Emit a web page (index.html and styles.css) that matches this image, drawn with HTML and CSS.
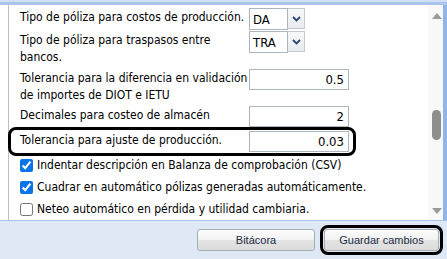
FILE: index.html
```html
<!DOCTYPE html>
<html lang="es">
<head>
  <meta charset="UTF-8">
  <title>Configuración</title>
  <link rel="stylesheet" href="styles.css">
</head>
<body>
  <div class="topbar"></div>
  <div class="panel">
    <div class="gutter"></div>
    <div class="content">
      <div class="row row-1">
        <div class="label">Tipo de póliza para costos de producción.</div>
        <div class="select">
          <span class="select-text">DA</span>
          <span class="select-btn">
            <svg width="9" height="6" viewBox="0 0 9 6"><path d="M1 1 L4.5 4.5 L8 1" fill="none" stroke="#2b4573" stroke-width="1.8"/></svg>
          </span>
        </div>
      </div>
      <div class="row row-2">
        <div class="label">Tipo de póliza para traspasos entre bancos.</div>
        <div class="select">
          <span class="select-text">TRA</span>
          <span class="select-btn">
            <svg width="9" height="6" viewBox="0 0 9 6"><path d="M1 1 L4.5 4.5 L8 1" fill="none" stroke="#2b4573" stroke-width="1.8"/></svg>
          </span>
        </div>
      </div>
      <div class="row row-3">
        <div class="label">Tolerancia para la diferencia en validación de importes de DIOT e IETU</div>
        <div class="field">0.5</div>
      </div>
      <div class="row row-4">
        <div class="label">Decimales para costeo de almacén</div>
        <div class="field">2</div>
      </div>
      <div class="row highlight">
        <div class="label">Tolerancia para ajuste de producción.</div>
        <div class="field">0.03</div>
      </div>
      <div class="checks">
        <label class="check"><input type="checkbox" checked> Indentar descripción en Balanza de comprobación (CSV)</label>
        <label class="check"><input type="checkbox" checked> Cuadrar en automático pólizas generadas automáticamente.</label>
        <label class="check"><input type="checkbox"> Neteo automático en pérdida y utilidad cambiaria.</label>
      </div>
    </div>
    <div class="scrollbar">
      <span class="arrow-up"></span>
      <span class="thumb"></span>
      <span class="arrow-down"></span>
    </div>
    <div class="edge"></div>
  </div>
  <div class="footer">
    <button class="btn">Bitácora</button>
    <div class="focus-ring">
      <button class="btn">Guardar cambios</button>
    </div>
  </div>
</body>
</html>
```

FILE: styles.css
```css
body {
  margin: 0;
  width: 447px;
  height: 259px;
  overflow: hidden;
  background-color: #dfe8f5;
  font-family: "DejaVu Sans Condensed", "DejaVu Sans", sans-serif;
  font-stretch: condensed;
  font-size: 12px;
  color: #000;
}
.topbar {
  height: 2px;
  background-color: #cfdff4;
  border-bottom: 3px solid #a9c5ec;
}
.panel {
  display: flex;
  height: 215px;
  background-color: #fff;
  border-bottom: 1px solid #a9c4ea;
}
.gutter {
  width: 8px;
  border-right: 1px solid #b8c2ce;
}
.content {
  flex: 1;
  padding-top: 3px;
}
.row {
  display: flex;
  align-items: flex-start;
  padding-left: 11px;
}
.row-2 { margin-top: 1px; }
.row-3 { margin-top: 3px; }
.row-4 { margin-top: 2px; }
.label {
  width: 229px;
  line-height: 17px;
  padding-top: 1px;
}
.row-2 .label {
  width: 210px;
  margin-right: 19px;
}
.select {
  display: flex;
  height: 22px;
}
.select-text {
  width: 34px;
  height: 20px;
  line-height: 21px;
  padding-left: 3px;
  border: 1px solid #aeb5bf;
  font-size: 13px;
}
.select-btn {
  width: 16px;
  height: 19px;
  border: 1px solid #c3c9d1;
  border-left: none;
  background: linear-gradient(#f7f8fa, #e8ebef);
  display: flex;
  align-items: center;
  justify-content: center;
}
.field {
  width: 94px;
  height: 19px;
  line-height: 20px;
  padding-right: 4px;
  border: 1px solid #aeb5bf;
  text-align: right;
  font-size: 13px;
}
.highlight {
  width: 329px;
  margin-left: -1px;
  padding: 1px 4px 1px 9px;
  border: 3px solid #000;
  border-radius: 8px;
}
.checks {
  margin-top: -2px;
}
.check {
  display: flex;
  align-items: center;
  height: 22px;
  padding-left: 11px;
  white-space: nowrap;
}
.check input {
  width: 13px;
  height: 13px;
  margin: 0 4px 0 0;
  accent-color: #0a74e8;
}
.scrollbar {
  position: relative;
  width: 15px;
  background-color: #f8f8f8;
}
.arrow-up,
.arrow-down {
  position: absolute;
  left: 4px;
  width: 0;
  height: 0;
  border-left: 5px solid transparent;
  border-right: 5px solid transparent;
}
.arrow-up {
  top: 8px;
  border-bottom: 6px solid #9a9a9a;
}
.arrow-down {
  top: 203px;
  border-top: 6px solid #9a9a9a;
}
.thumb {
  position: absolute;
  left: 4px;
  top: 105px;
  width: 9px;
  height: 30px;
  border-radius: 5px;
  background-color: #8e8e8e;
}
.edge {
  width: 4px;
  background-color: #8fb5ea;
}
.footer {
  display: flex;
  align-items: center;
  justify-content: flex-end;
  gap: 5px;
  height: 38px;
  padding-right: 4px;
}
.btn {
  width: 118px;
  height: 22px;
  padding: 0;
  border: 1px solid #a8aeb6;
  border-radius: 3px;
  background: linear-gradient(#fbfbfb 0%, #f3f3f3 50%, #e3e3e3 51%, #dcdcdc 100%);
  font-family: "Liberation Sans", Arial, sans-serif;
  font-size: 11px;
  color: #1d2b45;
}
.focus-ring {
  padding: 1px;
  border: 3px solid #000;
  border-radius: 8px;
}
.focus-ring .btn {
  width: 115px;
}
```
